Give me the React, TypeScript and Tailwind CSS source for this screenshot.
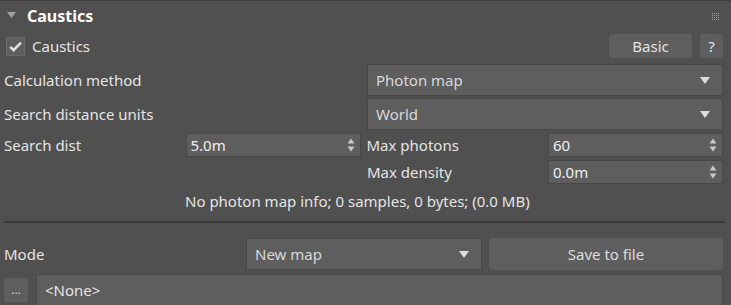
const FONT = "font-['Noto_Sans',sans-serif]";

function DownTri({ className = '' }: { className?: string }) {
  return (
    <svg width="10" height="7" viewBox="0 0 10 7" className={className}>
      <path d="M0 0 H10 L5 7 Z" fill="#dcdcdc" />
    </svg>
  );
}

function SpinArrows() {
  return (
    <svg width="8" height="14" viewBox="0 0 8 14" className="shrink-0">
      <path d="M0.5 5.5 L4 0.5 L7.5 5.5 Z" fill="#c8c8c8" />
      <path d="M0.5 8.5 L7.5 8.5 L4 13.5 Z" fill="#c8c8c8" />
    </svg>
  );
}

function Dropdown({ value, className = '' }: { value: string; className?: string }) {
  return (
    <div
      className={`flex h-[32px] items-center justify-between border border-[#484848] bg-[#5e5e5e] pl-[8px] pr-[12px] text-[#d8d8d8] ${className}`}
    >
      <span>{value}</span>
      <DownTri />
    </div>
  );
}

function Spinner({ value }: { value: string }) {
  return (
    <div className="flex h-[24px] w-[175px] shrink-0 items-center justify-between border border-[#484848] bg-[#5e5e5e] pl-[4px] pr-[5px] text-[#eeeeee]">
      <span>{value}</span>
      <SpinArrows />
    </div>
  );
}

function Grip() {
  return (
    <div className="grid grid-cols-4 gap-[1px]">
      {Array.from({ length: 16 }).map((_, i) => (
        <div key={i} className="h-[1px] w-[1px] bg-[#9a9a9a]" />
      ))}
    </div>
  );
}

export default function App() {
  return (
    <div className={`h-[305px] w-[731px] overflow-hidden border-t border-[#3e3e3e] bg-[#505050] text-[15px] leading-none text-[#e4e4e4] ${FONT}`}>
      {/* header */}
      <div className="flex h-[30px] items-center pl-[7px] pr-[12px]">
        <svg width="9" height="6" viewBox="0 0 9 6" className="mt-[-2px]">
          <path d="M0 0 H9 L4.5 6 Z" fill="#a0a0a0" />
        </svg>
        <span className="ml-[11px] text-[16px] font-bold text-white">Caustics</span>
        <div className="ml-auto">
          <Grip />
        </div>
      </div>

      {/* caustics checkbox row */}
      <div className="flex h-[30px] items-center pl-[6px] pr-[8px]">
        <div className="flex h-[19px] w-[19px] items-center justify-center border border-[#6a6a6a] bg-[#5e5e5e]">
          <svg width="13" height="11" viewBox="0 0 13 11">
            <path d="M1.2 5.8 L4.6 9.2 L12 1.6" stroke="#e0e0e0" strokeWidth="2.6" fill="none" />
          </svg>
        </div>
        <span className="ml-[7px]">Caustics</span>
        <button className="ml-auto h-[24px] w-[83px] rounded-[4px] bg-[#5e5e5e] text-[#e4e4e4]">Basic</button>
        <button className="ml-[8px] h-[24px] w-[23px] rounded-[4px] bg-[#5e5e5e] text-[#e4e4e4]">?</button>
      </div>

      {/* dropdown rows */}
      <div className="mt-[3px] flex flex-col gap-[2px] pl-[4px] pr-[8px]">
        <div className="flex items-center">
          <span className="w-[363px]">Calculation method</span>
          <Dropdown value="Photon map" className="flex-1" />
        </div>
        <div className="flex items-center">
          <span className="w-[363px]">Search distance units</span>
          <Dropdown value="World" className="flex-1" />
        </div>
      </div>

      {/* spinner rows */}
      <div className="mt-[3px] flex flex-col gap-[3px] pl-[4px] pr-[8px]">
        <div className="flex items-center">
          <span className="w-[182px]">Search dist</span>
          <Spinner value="5.0m" />
          <span className="ml-[6px] w-[182px]">Max photons</span>
          <Spinner value="60" />
        </div>
        <div className="flex items-center">
          <span className="ml-[363px] w-[182px]">Max density</span>
          <Spinner value="0.0m" />
        </div>
      </div>

      {/* info */}
      <div className="mt-[8px] flex h-[18px] items-center pl-[185px]">No photon map info; 0 samples, 0 bytes; (0.0 MB)</div>

      {/* separator */}
      <div className="ml-[4px] mr-[6px] mt-[11px] h-[2px] bg-[#3a3a3a]" />

      {/* mode row */}
      <div className="mt-[15px] flex items-center pl-[4px] pr-[8px]">
        <span className="w-[242px]">Mode</span>
        <Dropdown value="New map" className="w-[236px]" />
        <button className="ml-[7px] h-[32px] flex-1 rounded-[4px] bg-[#5e5e5e] text-[#dcdcdc]">Save to file</button>
      </div>

      {/* file row */}
      <div className="mt-[4px] flex items-center pl-[4px] pr-[8px]">
        <button className="h-[24px] w-[24px] rounded-[4px] bg-[#5e5e5e] text-[12px] text-[#c8c8c8]">...</button>
        <div className="ml-[8px] flex h-[32px] flex-1 items-center border border-[#484848] bg-[#5e5e5e] pl-[8px] text-[#e4e4e4]">
          &lt;None&gt;
        </div>
      </div>
    </div>
  );
}
